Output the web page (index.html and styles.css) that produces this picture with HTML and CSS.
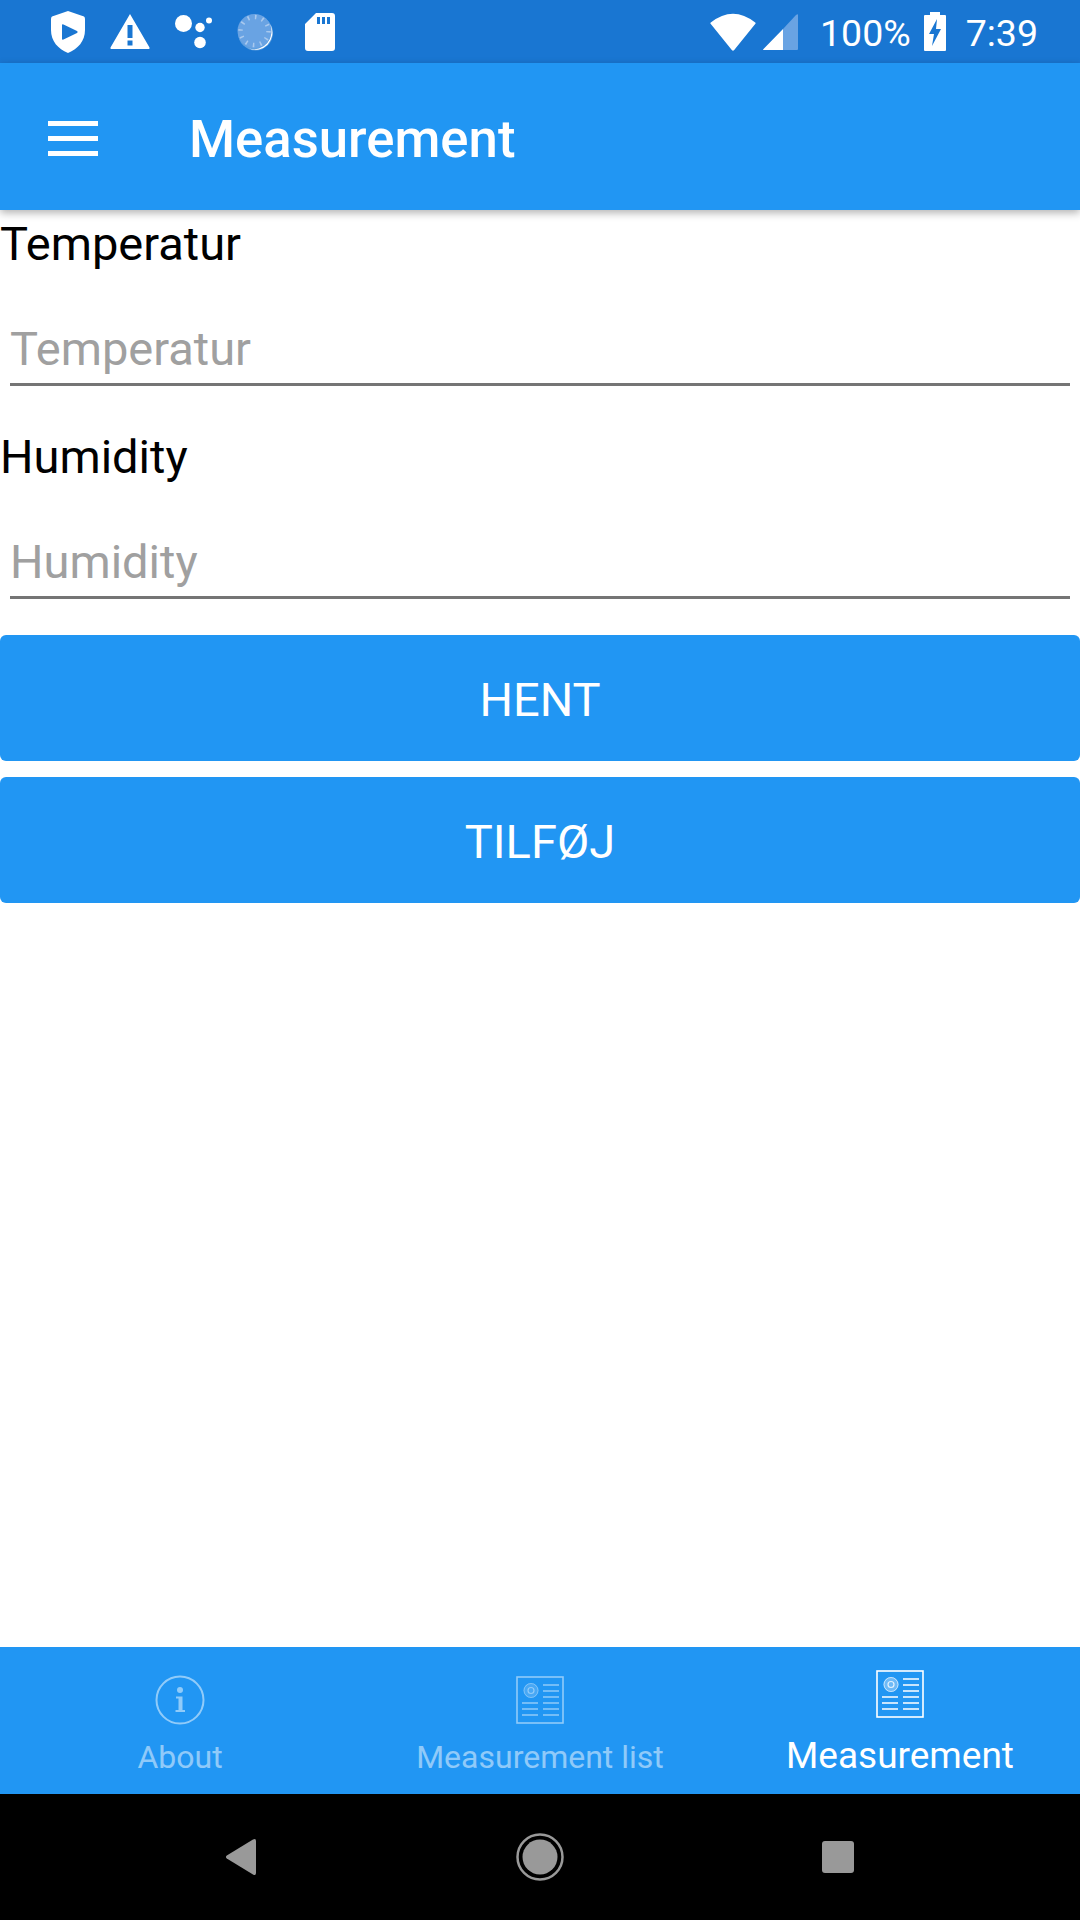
FILE: index.html
```html
<!DOCTYPE html>
<html lang="en">

<head>
    <meta charset="UTF-8">
    <meta name="viewport" content="width=device-width, initial-scale=1.0">
    <title>Measurement</title>
    <link rel="stylesheet" href="styles.css">
</head>

<body>
    <svg class="defs" width="0" height="0">
        <symbol id="doc" viewBox="0 0 48 48">
            <rect x="1" y="1" width="46" height="46" fill="none" stroke="currentColor" stroke-width="1.600" />
            <circle cx="15" cy="14.500" r="7.500" fill="currentColor" opacity=".35" />
            <circle cx="15" cy="14.500" r="7" fill="none" stroke="currentColor" stroke-width="1" opacity=".6" />
            <circle cx="15" cy="14.500" r="3" fill="none" stroke="currentColor" stroke-width="1.200" opacity=".8" />
            <path d="M27 9h16M27 15h16M27 21h16M6 27h16M27 27h16M6 33h16M27 33h16M6 39h16M27 39h16" fill="none"
                stroke="currentColor" stroke-width="1.600" />
        </symbol>
    </svg>

    <div class="status-bar">
        <div class="status-left">
            <svg class="ic-shield" width="34" height="42" viewBox="0 0 34 42">
                <path fill="#fff" fill-rule="evenodd"
                    d="M17 0 33 5.500 Q34 6 34 8V19C34 30 27 38 17 42 7 38 0 30 0 19V8Q0 6 1 5.500ZM11 14V28Q11 29 12.500 28.500L26 22Q27.500 21 26 20L12.500 13.500Q11 13 11 14Z" />
            </svg>
            <svg class="ic-warn" width="40" height="36" viewBox="0 0 40 36">
                <path fill="#fff" fill-rule="evenodd"
                    d="M20 0 39.500 33.500Q40 35 38.500 35H1.500Q0 35 .5 33.500ZM17.500 11V24H22.500V11ZM17.500 26.500V31.500H22.500V26.500Z" />
            </svg>
            <svg class="ic-dots" width="38" height="34" viewBox="0 0 38 34">
                <circle cx="8.500" cy="8.500" r="8.500" fill="#fff" />
                <circle cx="25" cy="12.500" r="4.700" fill="#fff" />
                <circle cx="34" cy="5.500" r="3" fill="#fff" />
                <circle cx="25" cy="27.500" r="5.800" fill="#fff" />
            </svg>
            <svg class="ic-sync" width="37" height="38" viewBox="0 0 37 38">
                <circle cx="18.500" cy="20" r="17.500" fill="#fff" opacity=".3" />
                <path d="M34 13A17 17 0 0 1 12 35.500 17 17 0 0 0 32 11Z" fill="#fff" />
                <circle cx="17.500" cy="18" r="17" fill="#69a3e3" />
                <circle cx="17.500" cy="18" r="14" fill="none" stroke="#a9c9ee" stroke-width="4.500"
                    stroke-dasharray="1.600 5.730" />
            </svg>
            <svg class="ic-sd" width="30" height="38" viewBox="0 0 30 38">
                <path fill="#fff" fill-rule="evenodd"
                    d="M11 0H27Q30 0 30 3V35Q30 38 27 38H3Q0 38 0 35V11ZM12 4V11H15V4ZM17 4V11H20V4ZM22 4V11H25V4Z" />
            </svg>
        </div>
        <div class="status-right">
            <svg class="ic-wifi" width="46" height="38" viewBox="0 0 46 38">
                <path fill="#fff"
                    d="M.8 9.500Q23-8 45.200 9.500Q46 10.200 45.200 11L24.200 37Q23 38.300 21.800 37L.8 11Q0 10.200 .8 9.500Z" />
            </svg>
            <svg class="ic-signal" width="35" height="36" viewBox="0 0 35 36">
                <path fill="#69a3e3" d="M35 1V35Q35 36 34 36H20V15L33 1Q35-.5 35 1Z" />
                <path fill="#fff" d="M20 15V36H1Q-.5 36 .5 35Z" />
            </svg>
            <span class="status-pct">100%</span>
            <svg class="ic-batt" width="22" height="39" viewBox="0 0 22 39">
                <path fill="#fff" fill-rule="evenodd"
                    d="M6 0H16V3H21Q22 3 22 4V38Q22 39 21 39H1Q0 39 0 38V4Q0 3 1 3H6ZM13 7 5 22H10L8 34 17 17H12Z" />
            </svg>
            <span class="status-time">7:39</span>
        </div>
    </div>

    <header class="app-bar">
        <div class="burger"><span></span><span></span><span></span></div>
        <h1 class="app-title">Measurement</h1>
    </header>

    <main class="content">
        <div class="field">
            <label class="field-label" for="temp">Temperatur</label>
            <input class="entry" id="temp" type="text" placeholder="Temperatur">
        </div>
        <div class="field">
            <label class="field-label" for="hum">Humidity</label>
            <input class="entry" id="hum" type="text" placeholder="Humidity">
        </div>
        <div class="actions">
            <button class="btn" type="button">HENT</button>
            <button class="btn" type="button">TILFØJ</button>
        </div>
    </main>

    <nav class="tabs">
        <a class="tab">
            <svg class="tab-icon" width="50" height="50" viewBox="0 0 50 50">
                <circle cx="25" cy="25" r="23.500" fill="none" stroke="currentColor" stroke-width="2" />
                <circle cx="25" cy="15" r="3" fill="currentColor" />
                <path d="M21 21.500h6.500V35H30v2H20.500v-2h3V23.500H21Z" fill="currentColor" />
            </svg>
            <span class="tab-label">About</span>
        </a>
        <a class="tab">
            <svg class="tab-icon" width="48" height="50">
                <use href="#doc" />
            </svg>
            <span class="tab-label">Measurement list</span>
        </a>
        <a class="tab active">
            <svg class="tab-icon" width="48" height="50">
                <use href="#doc" />
            </svg>
            <span class="tab-label">Measurement</span>
        </a>
    </nav>

    <div class="nav-bar">
        <svg class="nav-back" width="30" height="36" viewBox="0 0 30 36">
            <path fill="#999" d="M.8 16.500 27 .5Q30-1 30 2V34Q30 37 27 35.500L.8 19.500Q-1 18 .8 16.500Z" />
        </svg>
        <svg class="nav-home" width="48" height="48" viewBox="0 0 48 48">
            <circle cx="24" cy="24" r="22.500" fill="none" stroke="#999" stroke-width="2.500" />
            <circle cx="24" cy="24" r="17.500" fill="#999" />
        </svg>
        <div class="nav-recent"></div>
    </div>
</body>

</html>
```

FILE: styles.css
```css
* {
    box-sizing: border-box;
    margin: 0;
    padding: 0;
}

html,
body {
    height: 100%;
}

body {
    display: flex;
    flex-direction: column;
    width: 1080px;
    height: 1920px;
    overflow: hidden;
    font-family: Roboto, "Noto Sans", sans-serif;
    background: #fff;
    color: #000;
}

.defs {
    position: absolute;
}

.status-bar {
    display: flex;
    justify-content: space-between;
    align-items: center;
    height: 63px;
    padding: 0 42px 0 51px;
    background: #1976d2;
    color: #fff;
}

.status-left,
.status-right {
    display: flex;
    align-items: center;
}

.status-left svg,
.status-right svg {
    flex: none;
}

.ic-warn {
    margin-left: 25px;
}

.ic-dots {
    margin-left: 25px;
}

.ic-sync {
    margin-left: 24px;
}

.ic-sd {
    margin-left: 31px;
}

.ic-signal {
    margin-left: 7px;
}

.status-pct {
    margin: 3px 0 0 22px;
    font-size: 37.500px;
}

.ic-batt {
    margin-left: 13px;
}

.status-time {
    margin: 3px 0 0 20px;
    font-size: 37.500px;
}

.app-bar {
    position: relative;
    z-index: 2;
    display: flex;
    align-items: center;
    height: 147px;
    padding: 4px 0 0 48px;
    background: #2196f3;
    color: #fff;
    box-shadow: 0 3px 8px rgba(0, 0, 0, .3);
}

.burger {
    display: flex;
    flex-direction: column;
    gap: 10px;
    width: 50px;
}

.burger span {
    height: 5px;
    background: #fff;
}

.app-title {
    margin-left: 91px;
    font-size: 52.700px;
    font-weight: 500;
}

.content {
    flex: 1;
    padding-top: 6px;
}

.field + .field {
    margin-top: 43px;
}

.field-label {
    display: block;
    font-size: 47px;
    line-height: 55px;
}

.entry {
    display: block;
    width: 1060px;
    height: 115px;
    margin: 0 10px;
    padding: 50px 0 7px;
    border: 0;
    border-bottom: 3px solid #757575;
    outline: 0;
    font-family: inherit;
    font-size: 47px;
    line-height: 55px;
    background: transparent;
}

.entry::placeholder {
    color: #a0a0a0;
    opacity: 1;
}

.actions {
    display: flex;
    flex-direction: column;
    gap: 16px;
    margin-top: 36px;
}

.btn {
    height: 126px;
    padding-top: 2px;
    border: 0;
    border-radius: 6px;
    background: #2196f3;
    color: #fff;
    font-family: inherit;
    font-size: 47px;
}

.tabs {
    display: grid;
    grid-template-columns: repeat(3, 1fr);
    height: 147px;
    background: #2196f3;
}

.tab {
    display: flex;
    flex-direction: column;
    align-items: center;
    padding-top: 28px;
    color: rgba(255, 255, 255, .5);
    white-space: nowrap;
}

.tab-label {
    margin-top: 13px;
    font-size: 32px;
    line-height: 38px;
}

.tab.active {
    padding-top: 22px;
    color: #fff;
}

.tab.active .tab-label {
    margin-top: 15px;
    font-size: 37px;
    line-height: 44px;
}

.nav-bar {
    position: relative;
    height: 126px;
    display: grid;
    grid-template-columns: 516px 46px 1fr;
    align-items: center;
    background: #000;
}

.nav-back {
    justify-self: start;
    margin-left: 226px;
}

.nav-recent {
    width: 32px;
    height: 32px;
    margin-left: 260px;
    border-radius: 3px;
    background: #999;
}
```
